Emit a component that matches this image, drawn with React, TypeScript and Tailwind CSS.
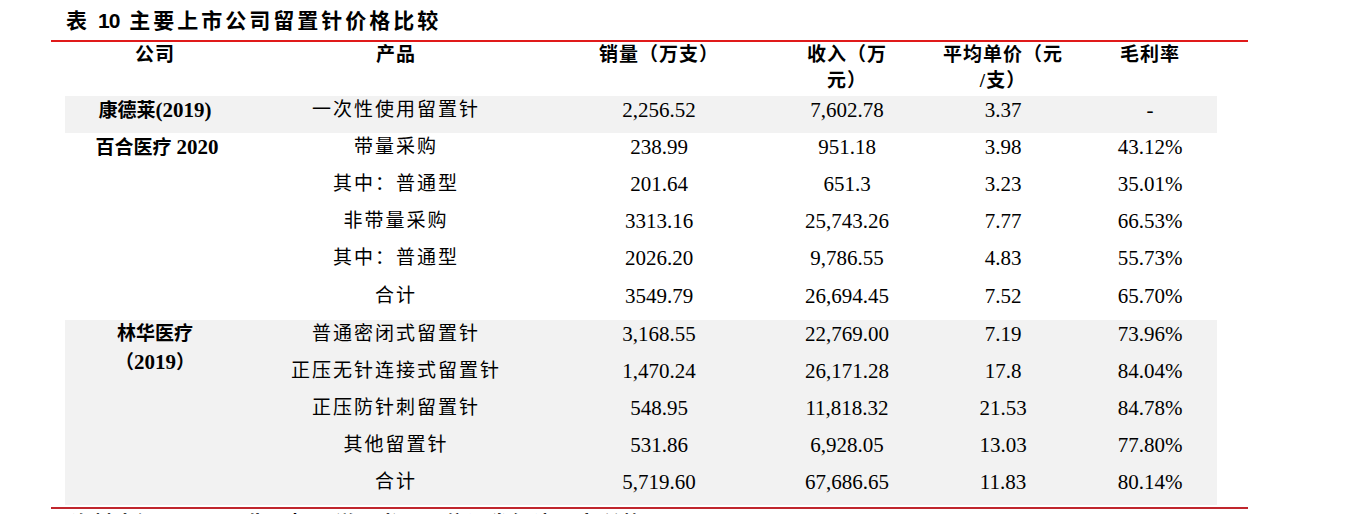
const cjk = "font-['Liberation_Serif','Noto_Sans_CJK_SC',serif]";

type Cells = [string, string, string, string, string];

const cols = ['w-[302px]', 'w-[224px]', 'w-[152px]', 'w-[160px]', 'w-[134px]'];

function DataRow({ cells, h = 'h-[37px]' }: { cells: Cells; h?: string }) {
    return (
        <div className={`flex ${h} leading-[28px] text-black`}>
            <div className={`${cols[0]} text-center text-[19px] tracking-[2px]`}>{cells[0]}</div>
            {cells.slice(1).map((c, i) => (
                <div key={i} className={`${cols[i + 1]} text-center text-[21px]`}>
                    {c}
                </div>
            ))}
        </div>
    );
}

const baihe: Cells[] = [
    ['带量采购', '238.99', '951.18', '3.98', '43.12%'],
    ['其中：普通型', '201.64', '651.3', '3.23', '35.01%'],
    ['非带量采购', '3313.16', '25,743.26', '7.77', '66.53%'],
    ['其中：普通型', '2026.20', '9,786.55', '4.83', '55.73%'],
    ['合计', '3549.79', '26,694.45', '7.52', '65.70%'],
];

const linhua: Cells[] = [
    ['普通密闭式留置针', '3,168.55', '22,769.00', '7.19', '73.96%'],
    ['正压无针连接式留置针', '1,470.24', '26,171.28', '17.8', '84.04%'],
    ['正压防针刺留置针', '548.95', '11,818.32', '21.53', '84.78%'],
    ['其他留置针', '531.86', '6,928.05', '13.03', '77.80%'],
    ['合计', '5,719.60', '67,686.65', '11.83', '80.14%'],
];

export default function App() {
    return (
        <div className={`w-[1347px] h-[514px] overflow-hidden bg-white ${cjk}`}>
            <div className="ml-[51px] w-[1197px]">
                {/* Title */}
                <div className="h-[40px] pt-[2px] leading-[38px] pl-[15px] text-[21px] font-bold tracking-[3px] text-black whitespace-nowrap">
                    表
                    <span className="font-['Liberation_Sans',sans-serif] text-[21px] tracking-[-1px] ml-[8px] mr-[10px]">10</span>
                    主要上市公司留置针价格比较
                </div>
                <div className="h-[2px] bg-[#e01a1a]" />

                <div className="ml-[14px] w-[1152px]">
                    {/* Header */}
                    <div className="flex h-[54px] leading-[26px] font-bold text-[19px] tracking-[1px] text-black">
                        <div className="w-[180px] text-center">公司</div>
                        <div className={`${cols[0]} text-center`}>产品</div>
                        <div className={`${cols[1]} text-center`}>销量（万支）</div>
                        <div className={`${cols[2]} text-center`}>
                            收入（万
                            <br />
                            元）
                        </div>
                        <div className={`${cols[3]} text-center`}>
                            平均单价（元
                            <br />
                            /支）
                        </div>
                        <div className={`${cols[4]} text-center`}>毛利率</div>
                    </div>

                    {/* 康德莱 */}
                    <div className="flex bg-[#f2f2f2]">
                        <div className="w-[180px] text-center font-bold text-[19px] leading-[28px]">
                            康德莱<span className="text-[21px]">(2019)</span>
                        </div>
                        <DataRow cells={['一次性使用留置针', '2,256.52', '7,602.78', '3.37', '-']} />
                    </div>

                    {/* 百合医疗 */}
                    <div className="flex">
                        <div className="w-[180px] text-center font-bold text-[19px] leading-[28px] pl-[4px]">
                            百合医疗 <span className="text-[21px]">2020</span>
                        </div>
                        <div>
                            {baihe.map((r, i) => (
                                <DataRow key={i} cells={r} h={i > 2 ? 'h-[38px]' : 'h-[37px]'} />
                            ))}
                        </div>
                    </div>

                    {/* 林华医疗 */}
                    <div className="flex bg-[#f2f2f2]">
                        <div className="w-[180px] text-center font-bold text-[19px] leading-[28px]">
                            林华医疗
                            <br />
                            （<span className="text-[21px]">2019</span>）
                        </div>
                        <div>
                            {linhua.map((r, i) => (
                                <DataRow key={i} cells={r} />
                            ))}
                        </div>
                    </div>
                </div>

                <div className="mt-[2px] h-[2px] bg-[#c0262d]" />
                <div className="pl-[20px] pt-[3px] text-[20px] font-bold leading-[24px] tracking-[2px] text-black">
                    资料来源：公司公告，招股说明书，国信证券经济研究所整理
                </div>
            </div>
        </div>
    );
}
